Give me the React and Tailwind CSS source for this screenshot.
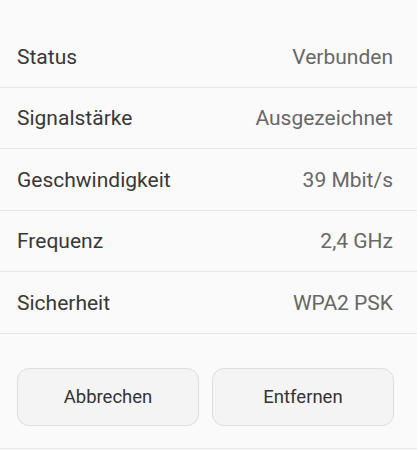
const rows = [
  ['Status', 'Verbunden'],
  ['Signalstärke', 'Ausgezeichnet'],
  ['Geschwindigkeit', '39 Mbit/s'],
  ['Frequenz', '2,4 GHz'],
  ['Sicherheit', 'WPA2 PSK'],
];

export default function App() {
  return (
    <div className="w-[417px] h-[450px] bg-[#fafafa] font-['Roboto',sans-serif] overflow-hidden">
      <div className="pt-[26px]">
        {rows.map(([label, value]) => (
          <div
            key={label}
            className="h-[61.5px] flex items-center justify-between pl-[17px] pr-[24px] pt-[2px] border-b border-[#e6e6e6]"
          >
            <span className="text-[21px] text-[#383838]">{label}</span>
            <span className="text-[21px] text-[#686868]">{value}</span>
          </div>
        ))}
      </div>

      {/* Buttons */}
      <div className="flex gap-[13px] pl-[17px] pr-[23px] pt-[34px] pb-[22px] border-b border-[#e6e6e6]">
        <button className="flex-1 h-[58px] pt-[3px] rounded-[12px] border border-[#dedede] bg-[#f4f4f4] text-[18.5px] text-[#333]">
          Abbrechen
        </button>
        <button className="flex-1 h-[58px] pt-[3px] rounded-[12px] border border-[#dedede] bg-[#f4f4f4] text-[18.5px] text-[#333]">
          Entfernen
        </button>
      </div>
    </div>
  );
}
